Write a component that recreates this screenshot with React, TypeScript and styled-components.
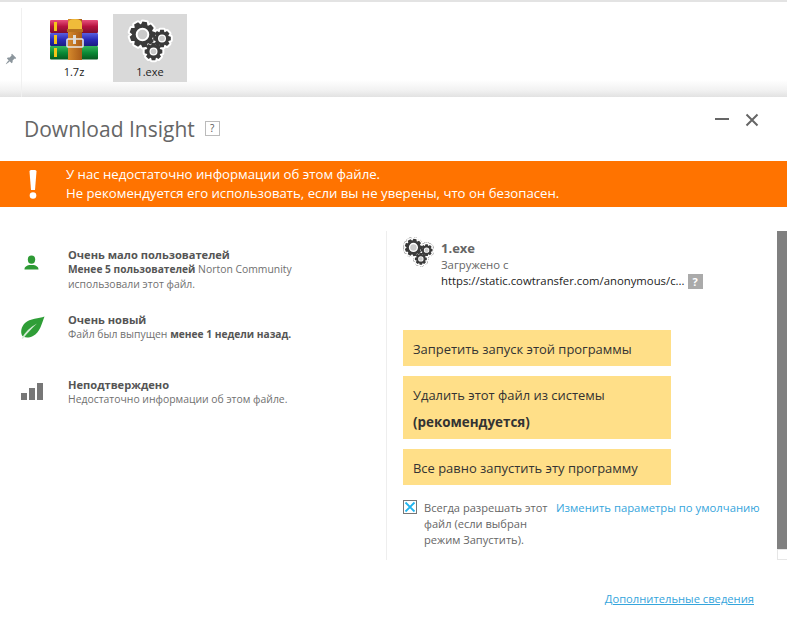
import React from 'react';
import styled, { createGlobalStyle } from 'styled-components';

const GlobalStyle = createGlobalStyle`
  html, body {
    margin: 0;
    padding: 0;
    background: #fff;
    overflow: hidden;
  }
  body {
    font-family: 'Open Sans', 'Noto Sans', sans-serif;
  }
`;

const Page = styled.div`
  width: 787px;
  height: 621px;
  display: flex;
  flex-direction: column;
  overflow: hidden;
`;

const Explorer = styled.div`
  height: 97px;
  flex-shrink: 0;
  display: flex;
  box-sizing: border-box;
  border-top: 2px solid #e3e3e3;
  background: linear-gradient(to bottom, #fff 0, #fff 78px, #f2f2f2 88px, #e2e2e2 95px);
`;

const PinColumn = styled.div`
  width: 21px;
  margin-top: 6px;
  border-right: 1px solid #f0f0f0;
  display: flex;
  align-items: flex-start;
  justify-content: center;
  padding-top: 45px;
  box-sizing: content-box;
`;

const FileList = styled.div`
  display: flex;
  padding: 12px 0 0 15px;
  gap: 2px;
`;

const FileItem = styled.div<{ selected?: boolean }>`
  width: 74px;
  height: 68px;
  display: flex;
  flex-direction: column;
  align-items: center;
  background: ${props => (props.selected ? '#d9d9d9' : 'transparent')};
`;

const FileIconBox = styled.div`
  height: 44px;
  margin-top: 5px;
  margin-bottom: 1px;
`;

const FileLabel = styled.div`
  font-size: 11px;
  line-height: 15px;
  color: #222;
`;

const Dialog = styled.div`
  flex: 1;
  display: flex;
  flex-direction: column;
  min-height: 0;
`;

const TitleBar = styled.div`
  height: 64px;
  flex-shrink: 0;
  display: flex;
  align-items: flex-start;
  padding: 17px 28px 0 24px;
  box-sizing: border-box;
`;

const Title = styled.h1`
  margin: 0;
  font-size: 21px;
  line-height: 30px;
  font-weight: 400;
  color: #666;
`;

const HelpBox = styled.span`
  width: 13px;
  height: 13px;
  margin: 7px 0 0 10px;
  border: 1px solid #bbb;
  color: #555;
  font-size: 10px;
  line-height: 13px;
  text-align: center;
`;

const WindowButtons = styled.div`
  margin-left: auto;
  display: flex;
  gap: 16px;
  margin-top: -1px;
`;

const Banner = styled.div`
  height: 46px;
  flex-shrink: 0;
  display: flex;
  align-items: center;
  background: #ff7300;
  color: #fff;
`;

const BannerMark = styled.div`
  width: 66px;
  display: flex;
  justify-content: center;
`;

const BannerText = styled.div`
  font-size: 13.2px;
  line-height: 19px;
`;

const Body = styled.div`
  height: 353px;
  flex-shrink: 0;
  display: flex;
  padding-top: 24px;
  box-sizing: border-box;
`;

const LeftColumn = styled.div`
  width: 387px;
  height: 329px;
  flex-shrink: 0;
  box-sizing: border-box;
  padding-top: 16px;
  border-right: 1px solid #eee;
`;

const InfoRow = styled.div`
  height: 65px;
  display: flex;
`;

const InfoIcon = styled.div<{ offset: number }>`
  width: 68px;
  flex-shrink: 0;
  padding: ${props => props.offset}px 0 0 20px;
  box-sizing: border-box;
`;

const InfoText = styled.div`
  font-size: 10.4px;
  line-height: 15px;
  color: #707070;
  b {
    color: #555;
    font-size: 10.2px;
    font-weight: 700;
  }
`;

const InfoTitle = styled.div`
  font-size: 11.1px;
  font-weight: 700;
  color: #555;
`;

const RightColumn = styled.div`
  flex: 1;
  padding-left: 16px;
  min-width: 0;
`;

const FileHead = styled.div`
  display: flex;
  gap: 7px;
  height: 99px;
`;

const FileHeadIcon = styled.div`
  margin-top: 6px;
`;

const FileMeta = styled.div`
  padding-top: 8px;
  font-size: 11.33px;
  line-height: 16px;
  color: #666;
`;

const FileName = styled.div`
  font-size: 13px;
  line-height: 18px;
  font-weight: 700;
  color: #666;
`;

const UrlRow = styled.div`
  display: flex;
  align-items: center;
  gap: 3px;
  color: #222;
  white-space: nowrap;
`;

const GreyHelp = styled.span`
  width: 15px;
  height: 15px;
  background: #aaa;
  color: #fff;
  font-size: 11px;
  line-height: 15px;
  font-weight: 700;
  text-align: center;
`;

const Actions = styled.div`
  display: flex;
  flex-direction: column;
  gap: 10px;
  width: 268px;
`;

const ActionButton = styled.div<{ tall?: boolean }>`
  height: ${props => (props.tall ? '63px' : '36px')};
  box-sizing: border-box;
  padding: ${props => (props.tall ? '6px' : '11px')} 0 0 10px;
  background: #ffdf88;
  color: #333;
  font-size: 12.95px;
  line-height: ${props => (props.tall ? '27px' : '17px')};
  white-space: nowrap;
  b {
    font-size: 13.4px;
  }
`;

const AllowRow = styled.div`
  display: flex;
  margin-top: 15px;
  font-size: 11.1px;
  line-height: 16px;
`;

const CheckBox = styled.div`
  width: 14px;
  height: 14px;
  box-sizing: border-box;
  border: 1px solid #777;
  flex-shrink: 0;
  margin: 0 7px 0 0;
  display: flex;
  align-items: center;
  justify-content: center;
`;

const AllowText = styled.div`
  width: 132px;
  color: #666;
`;

const InlineLink = styled.a`
  color: #35a5dc;
  font-size: 11.3px;
  white-space: nowrap;
`;

const ScrollTrack = styled.div`
  width: 10px;
  flex-shrink: 0;
  display: flex;
  flex-direction: column;
`;

const ScrollThumb = styled.div`
  height: 326px;
  background: #808080;
`;

const ScrollEnd = styled.div`
  height: 11px;
  box-sizing: border-box;
  border: 1px solid #e6e6e6;
  border-right: none;
`;

const Footer = styled.div`
  display: flex;
  justify-content: flex-end;
  padding: 31px 33px 0 0;
`;

const FooterLink = styled.a`
  color: #35a5dc;
  font-size: 11.2px;
  line-height: 16px;
  text-decoration: underline;
`;

// builds a cog outline, teeth as trapezoids around the centre
const gearPath = (cx: number, cy: number, outer: number, inner: number, hole: number, teeth: number) => {
  const pts: string[] = [];
  const step = (Math.PI * 2) / teeth;
  for (let i = 0; i < teeth; i++) {
    const a = i * step;
    [
      [inner, -0.5],
      [outer, -0.28],
      [outer, 0.28],
      [inner, 0.5],
    ].forEach(([r, k]) => {
      const t = a + k * step * 0.9;
      pts.push(`${(cx + r * Math.cos(t)).toFixed(2)} ${(cy + r * Math.sin(t)).toFixed(2)}`);
    });
  }
  const ring = `M${cx - hole} ${cy}a${hole} ${hole} 0 1 0 ${hole * 2} 0a${hole} ${hole} 0 1 0 ${-hole * 2} 0Z`;
  return `M${pts.join('L')}Z${ring}`;
};

const gears = [
  { d: gearPath(15.5, 15.5, 13, 10.4, 6.8, 9), cx: 15.5, cy: 15.5, r: 4.8 },
  { d: gearPath(35, 19.5, 9, 6.9, 4, 8), cx: 35, cy: 19.5, r: 2.8 },
  { d: gearPath(26.5, 32.5, 9, 6.9, 4, 8), cx: 26.5, cy: 32.5, r: 2.8 },
];

const GearsIcon: React.FC<{ size: number; dashed?: boolean }> = ({ size, dashed }) => (
  <svg width={size} height={size} viewBox="0 0 46 46">
    {dashed &&
      gears.map(g => (
        <path key={g.cx} d={g.d} fill="none" stroke="#888" strokeWidth="5.5" strokeDasharray="1.2 1" strokeLinejoin="round" />
      ))}
    {gears.map(g => (
      <g key={g.cx}>
        <path d={g.d} fill="#fff" stroke="#fff" strokeWidth="4" strokeLinejoin="round" />
        <circle cx={g.cx} cy={g.cy} r={g.r + 2.2} fill="#fff" />
      </g>
    ))}
    {gears.map(g => (
      <path key={g.cx} d={g.d} fill="#3a3a3a" fillRule="evenodd" />
    ))}
    {gears.map(g => (
      <circle key={g.cx} cx={g.cx} cy={g.cy} r={g.r} fill="#c9c9c9" />
    ))}
  </svg>
);

const ArchiveIcon: React.FC = () => (
  <svg width="48" height="42" viewBox="0 0 48 42">
    <defs>
      <linearGradient id="red" x1="0" y1="0" x2="0" y2="1">
        <stop offset="0" stopColor="#e8507c" />
        <stop offset="0.5" stopColor="#b5123f" />
        <stop offset="1" stopColor="#7c0f30" />
      </linearGradient>
      <linearGradient id="blue" x1="0" y1="0" x2="0" y2="1">
        <stop offset="0" stopColor="#5a5fe0" />
        <stop offset="0.5" stopColor="#2a2bb8" />
        <stop offset="1" stopColor="#1b1c80" />
      </linearGradient>
      <linearGradient id="green" x1="0" y1="0" x2="0" y2="1">
        <stop offset="0" stopColor="#37b45c" />
        <stop offset="0.5" stopColor="#0b8a36" />
        <stop offset="1" stopColor="#07591f" />
      </linearGradient>
      <linearGradient id="strap" x1="0" y1="0" x2="1" y2="0">
        <stop offset="0" stopColor="#d68a2c" />
        <stop offset="1" stopColor="#a85a18" />
      </linearGradient>
    </defs>
    <rect x="0" y="1" width="48" height="13" rx="1" fill="url(#red)" />
    <rect x="0" y="14" width="48" height="13" rx="1" fill="url(#blue)" />
    <rect x="0" y="27" width="48" height="13.5" rx="1" fill="url(#green)" />
    <rect x="4" y="3" width="3" height="9" fill="#f5c518" />
    <rect x="4" y="16" width="3" height="9" fill="#f5c518" />
    <rect x="4" y="29" width="3" height="9" fill="#f5c518" />
    <rect x="18" y="0" width="14" height="41" fill="url(#strap)" />
    <path d="M18 12V5q0-5 7-5t7 5v7Z" fill="#f0bb3a" />
    <rect x="17" y="10" width="16" height="3" fill="#b5701e" />
    <rect x="17" y="20" width="16" height="8" rx="1" fill="none" stroke="#e8e8e8" strokeWidth="1.6" />
    <rect x="23" y="16" width="3" height="9" fill="#ddd" />
  </svg>
);

const PinIcon: React.FC = () => (
  <svg width="12" height="12" viewBox="0 0 12 12" fill="#8b959c">
    <path d="M7 0.8L11.2 5 10.2 5.9 9.6 5.5 7.6 7.4 7.6 9.3 6.7 10.2 1.9 5.4 2.8 4.6 4.6 4.5 6.6 2.5 6.2 1.7Z" />
    <path d="M3.5 7.3L4.8 8.6 1 11.2 0.8 11Z" />
  </svg>
);

const UserIcon: React.FC = () => (
  <svg width="19" height="15" viewBox="-4 0 19 15" fill="#2e9a35">
    <ellipse cx="7.5" cy="4.6" rx="3.7" ry="4.2" />
    <path d="M0.5 14.5c0-3 2.5-3.600 4.600-4.400l4.800 0c2.100 0.800 4.600 1.400 4.600 4.400Z" />
  </svg>
);

const LeafIcon: React.FC = () => (
  <svg width="25" height="23" viewBox="0 0 25 23">
    <path d="M24.500 0.500C19 3 10 2 5 7 1 11 0.500 16 2 19.500 3.500 21.500 8 22.500 13 20 20 16.500 22 7 24.500 0.500Z" fill="#2f9e37" />
    <path d="M1.500 22.500C5 16 10 11 17 7.500 12 12.500 7.500 16.500 3 22.800Z" fill="#d4ecd4" />
  </svg>
);

const BarsIcon: React.FC = () => (
  <svg width="23" height="18" viewBox="-1 0 23 18" fill="#777">
    <rect x="0" y="10" width="6" height="7" />
    <rect x="8" y="5" width="6" height="12" />
    <rect x="16" y="0" width="6" height="17" />
  </svg>
);

const App: React.FC = () => (
  <Page>
    <GlobalStyle />
    <Explorer>
      <PinColumn>
        <PinIcon />
      </PinColumn>
      <FileList>
        <FileItem>
          <FileIconBox>
            <ArchiveIcon />
          </FileIconBox>
          <FileLabel>1.7z</FileLabel>
        </FileItem>
        <FileItem selected>
          <FileIconBox>
            <GearsIcon size={46} />
          </FileIconBox>
          <FileLabel>1.exe</FileLabel>
        </FileItem>
      </FileList>
    </Explorer>
    <Dialog>
      <TitleBar>
        <Title>Download Insight</Title>
        <HelpBox>?</HelpBox>
        <WindowButtons>
          <svg width="14" height="14" viewBox="0 0 14 14">
            <rect x="0" y="5" width="14" height="2" fill="#666" />
          </svg>
          <svg width="14" height="14" viewBox="0 0 14 14">
            <path d="M1.500 1.500L12.500 12.500M12.500 1.500L1.500 12.500" stroke="#666" strokeWidth="2" />
          </svg>
        </WindowButtons>
      </TitleBar>
      <Banner>
        <BannerMark>
          <svg width="8" height="29" viewBox="0 0 8 29" fill="#fff">
            <path d="M0.500 1.500Q0.500 0 2 0H6Q7.500 0 7.500 1.500L6 20H2Z" />
            <circle cx="4" cy="25.500" r="3.300" />
          </svg>
        </BannerMark>
        <BannerText>
          У нас недостаточно информации об этом файле.
          <br />
          Не рекомендуется его использовать, если вы не уверены, что он безопасен.
        </BannerText>
      </Banner>
      <Body>
        <LeftColumn>
          <InfoRow>
            <InfoIcon offset={6}>
              <UserIcon />
            </InfoIcon>
            <InfoText>
              <InfoTitle>Очень мало пользователей</InfoTitle>
              <b>Менее 5 пользователей</b> Norton Community
              <br />
              использовали этот файл.
            </InfoText>
          </InfoRow>
          <InfoRow>
            <InfoIcon offset={4}>
              <LeafIcon />
            </InfoIcon>
            <InfoText>
              <InfoTitle>Очень новый</InfoTitle>
              Файл был выпущен <b>менее 1 недели назад.</b>
            </InfoText>
          </InfoRow>
          <InfoRow>
            <InfoIcon offset={6}>
              <BarsIcon />
            </InfoIcon>
            <InfoText>
              <InfoTitle>Неподтверждено</InfoTitle>
              Недостаточно информации об этом файле.
            </InfoText>
          </InfoRow>
        </LeftColumn>
        <RightColumn>
          <FileHead>
            <FileHeadIcon>
              <GearsIcon size={31} dashed />
            </FileHeadIcon>
            <FileMeta>
              <FileName>1.exe</FileName>
              Загружено с
              <UrlRow>
                https://static.cowtransfer.com/anonymous/c...
                <GreyHelp>?</GreyHelp>
              </UrlRow>
            </FileMeta>
          </FileHead>
          <Actions>
            <ActionButton>Запретить запуск этой программы</ActionButton>
            <ActionButton tall>
              Удалить этот файл из системы
              <br />
              <b>(рекомендуется)</b>
            </ActionButton>
            <ActionButton>Все равно запустить эту программу</ActionButton>
          </Actions>
          <AllowRow>
            <CheckBox>
              <svg width="12" height="12" viewBox="0 0 12 12">
                <path d="M1.500 1.500L10.500 10.500M10.500 1.500L1.500 10.500" stroke="#1fb4ee" strokeWidth="1.800" />
              </svg>
            </CheckBox>
            <AllowText>
              Всегда разрешать этот файл (если выбран режим Запустить).
            </AllowText>
            <InlineLink>Изменить параметры по умолчанию</InlineLink>
          </AllowRow>
        </RightColumn>
        <ScrollTrack>
          <ScrollThumb />
          <ScrollEnd />
        </ScrollTrack>
      </Body>
      <Footer>
        <FooterLink>Дополнительные сведения</FooterLink>
      </Footer>
    </Dialog>
  </Page>
);

export default App;
